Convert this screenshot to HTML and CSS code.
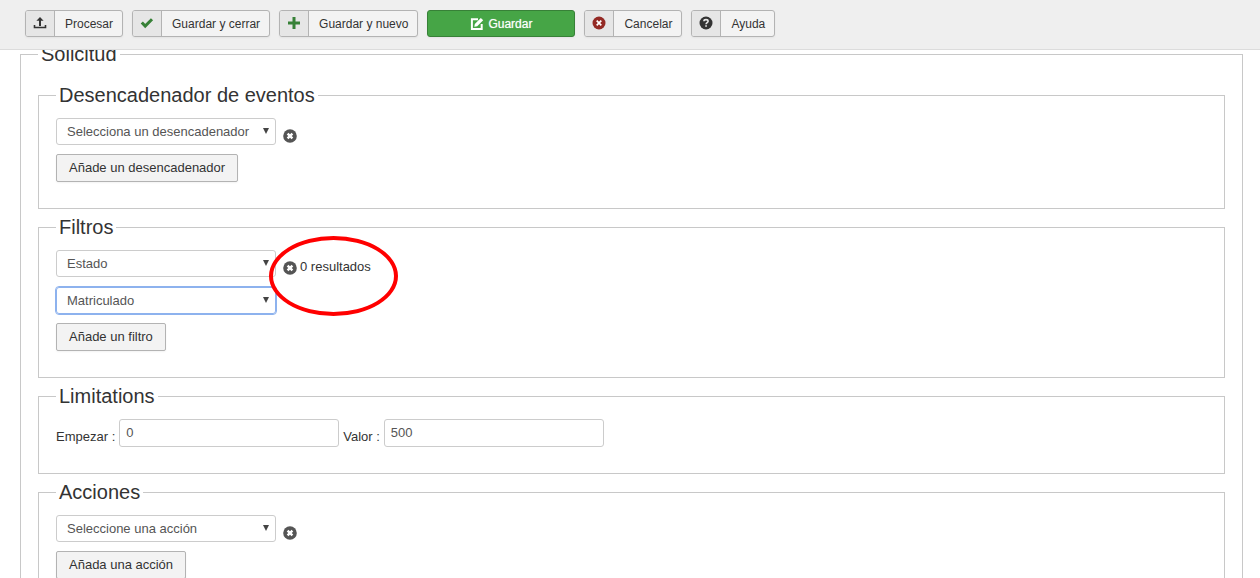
FILE: index.html
```html
<!DOCTYPE html>
<html lang="es">
<head>
    <meta charset="UTF-8">
    <meta name="viewport" content="width=device-width, initial-scale=1.0">
    <title>Solicitud</title>
    <link rel="stylesheet" href="styles.css">
</head>
<body>
<!-- Iconos compartidos -->
<svg class="sprite" aria-hidden="true">
    <symbol id="remove" viewBox="0 0 14 14">
        <circle cx="7" cy="7" r="6.8" fill="#555"/>
        <path d="M4.6 4.6l4.8 4.8M9.4 4.6l-4.8 4.8" stroke="#fff" stroke-width="2.4"/>
    </symbol>
</svg>

<header class="toolbar">
    <button type="button" class="btn">
        <span class="btn-icon">
            <svg width="14" height="14" viewBox="0 0 14 14"><path d="M7 1l3.6 3.8H8V10H6V4.8H3.4z" fill="#333"/><path d="M1.500 9v2.500h11V9" fill="none" stroke="#333" stroke-width="1.6"/></svg>
        </span>
        <span class="btn-text">Procesar</span>
    </button>
    <button type="button" class="btn">
        <span class="btn-icon">
            <svg width="14" height="14" viewBox="0 0 14 14"><path d="M1.8 6.5l3.4 3.6L12 3.2" fill="none" stroke="#378137" stroke-width="3"/></svg>
        </span>
        <span class="btn-text">Guardar y cerrar</span>
    </button>
    <button type="button" class="btn">
        <span class="btn-icon">
            <svg width="14" height="14" viewBox="0 0 14 14"><path d="M7 1v12M1 7h12" stroke="#378137" stroke-width="3"/></svg>
        </span>
        <span class="btn-text">Guardar y nuevo</span>
    </button>
    <button type="button" class="btn btn-success">
        <svg width="14" height="14" viewBox="0 0 14 14"><path d="M8 2.300H1.900v9.800h9.800V7" fill="none" stroke="#fff" stroke-width="2"/><path d="M4.300 9.800l.5-2.900 6-6 2.400 2.400-6 6z" fill="#fff"/></svg>
        Guardar
    </button>
    <button type="button" class="btn">
        <span class="btn-icon">
            <svg width="14" height="14" viewBox="0 0 14 14"><circle cx="7" cy="7" r="6.5" fill="#942a25"/><path d="M4.700 4.700l4.600 4.600M9.300 4.700L4.700 9.300" stroke="#fff" stroke-width="1.7"/></svg>
        </span>
        <span class="btn-text">Cancelar</span>
    </button>
    <button type="button" class="btn">
        <span class="btn-icon">
            <svg width="14" height="14" viewBox="0 0 14 14"><circle cx="7" cy="7" r="6.5" fill="#333"/><path d="M4.900 5.300c0-2.200 4.200-2.200 4.200 0 0 1.400-2 1.300-2 2.900" fill="none" stroke="#e6e6e6" stroke-width="1.6"/><path d="M6.200 9.200h1.700v1.600H6.200z" fill="#e6e6e6"/></svg>
        </span>
        <span class="btn-text">Ayuda</span>
    </button>
</header>

<main>
    <form>
        <fieldset class="request">
            <legend>Solicitud</legend>

            <fieldset>
                <legend>Desencadenador de eventos</legend>
                <div class="rows">
                    <div class="row">
                        <select class="select" aria-label="Desencadenador">
                            <option>Selecciona un desencadenador</option>
                        </select>
                        <button type="button" class="remove" aria-label="Eliminar desencadenador"><svg width="14" height="14"><use href="#remove"/></svg></button>
                    </div>
                    <button type="button" class="btn-add">Añade un desencadenador</button>
                </div>
            </fieldset>

            <fieldset>
                <legend>Filtros</legend>
                <div class="rows">
                    <div class="row">
                        <select class="select" aria-label="Filtro">
                            <option>Estado</option>
                        </select>
                        <button type="button" class="remove" aria-label="Eliminar filtro"><svg width="14" height="14"><use href="#remove"/></svg></button>
                        <span class="result">0 resultados</span>
                        <span class="highlight"></span>
                    </div>
                    <select class="select active" aria-label="Valor del filtro">
                        <option>Matriculado</option>
                    </select>
                    <button type="button" class="btn-add">Añade un filtro</button>
                </div>
            </fieldset>

            <fieldset>
                <legend>Limitations</legend>
                <div class="limits">
                    <label for="start">Empezar :</label>
                    <input type="text" id="start" value="0">
                    <label for="value">Valor :</label>
                    <input type="text" id="value" value="500">
                </div>
            </fieldset>

            <fieldset>
                <legend>Acciones</legend>
                <div class="rows">
                    <div class="row">
                        <select class="select" aria-label="Acción">
                            <option>Seleccione una acción</option>
                        </select>
                        <button type="button" class="remove" aria-label="Eliminar acción"><svg width="14" height="14"><use href="#remove"/></svg></button>
                    </div>
                    <button type="button" class="btn-add">Añada una acción</button>
                </div>
            </fieldset>
        </fieldset>
    </form>
</main>
</body>
</html>
```
FILE: styles.css
```css
:root {
    --text-color: #333;
    --input-color: #555;
    --line-color: #c8c8c8;
    --btn-bg: #f3f3f3;
    --btn-border: #b3b3b3;
    --success: #46a546;
}

* {
    box-sizing: border-box;
}

body {
    margin: 0;
    background: #fff;
    color: var(--text-color);
    font-family: "Liberation Sans", Arial, sans-serif;
    font-size: 13px;
    line-height: 18px;
}

button,
input,
select {
    margin: 0;
    font-family: inherit;
    font-size: 13px;
}

.sprite {
    position: absolute;
    width: 0;
    height: 0;
}

/* Barra de herramientas */
.toolbar {
    position: fixed;
    top: 0;
    left: 0;
    right: 0;
    z-index: 10;
    display: flex;
    gap: 9px;
    padding: 10px 25px 12px;
    background: #efefef;
    border-bottom: 1px solid #dcdcdc;
}

.btn {
    display: flex;
    align-items: stretch;
    height: 27px;
    padding: 0;
    overflow: hidden;
    background: var(--btn-bg);
    border: 1px solid var(--btn-border);
    border-radius: 3px;
    box-shadow: 0 1px 2px rgba(0, 0, 0, 0.05);
    color: var(--text-color);
    font-size: 12px;
    line-height: 26px;
    cursor: pointer;
}

.btn-icon {
    display: flex;
    align-items: center;
    justify-content: center;
    width: 29px;
    padding-bottom: 2px;
    background: #e6e6e6;
    border-right: 1px solid var(--btn-border);
}

.btn-text {
    padding: 0 9px 0 10px;
}

.btn-success {
    align-items: center;
    justify-content: center;
    gap: 4px;
    width: 148px;
    background: var(--success);
    border-color: #378137;
    color: #fff;
    text-shadow: 0 0 1px rgba(255, 255, 255, 0.6);
}

/* Formulario */
main {
    padding: 43px 17px 20px 20px;
}

fieldset {
    min-width: 0;
    margin: 0 0 7px;
    padding: 11px 17px 26px;
    border: 1px solid var(--line-color);
}

.request {
    padding-top: 18px;
}

legend {
    padding: 0 3px;
    font-size: 20px;
    line-height: 23px;
}

.rows {
    display: flex;
    flex-direction: column;
    align-items: flex-start;
    gap: 9px;
}

.row {
    position: relative;
    display: flex;
    align-items: flex-end;
}

.select {
    width: 220px;
    height: 27px;
    padding: 0 20px 0 10px;
    appearance: none;
    background: #fff url("data:image/svg+xml,%3Csvg xmlns='http://www.w3.org/2000/svg' width='6' height='6'%3E%3Cpath d='M0 0h6L3 6z' fill='%23444'/%3E%3C/svg%3E") no-repeat right 6px top 9px;
    border: 1px solid #ccc;
    border-radius: 3px;
    color: var(--input-color);
}

.select.active {
    margin-top: 1px;
    border-color: #8db2ee;
    outline: 1px solid #8db2ee;
}

.remove {
    display: flex;
    margin: 0 3px 2px 7px;
    padding: 0;
    background: none;
    border: none;
    cursor: pointer;
}

.result {
    line-height: 20px;
}

/* Marca roja sobre el resultado */
.highlight {
    position: absolute;
    top: -14px;
    left: 213px;
    width: 129px;
    height: 80px;
    border: 4px solid #f00;
    border-radius: 50%;
    pointer-events: none;
}

.btn-add {
    height: 28px;
    padding: 0 12px 2px;
    background: var(--btn-bg);
    border: 1px solid var(--btn-border);
    border-radius: 2px;
    box-shadow: 0 1px 2px rgba(0, 0, 0, 0.05);
    color: var(--text-color);
    cursor: pointer;
}

.limits {
    display: flex;
    align-items: flex-end;
    gap: 4px;
}

.limits label {
    line-height: 20px;
}

.limits input {
    width: 220px;
    height: 28px;
    padding: 0 6px 2px;
    border: 1px solid #ccc;
    border-radius: 3px;
    color: var(--input-color);
}
```
